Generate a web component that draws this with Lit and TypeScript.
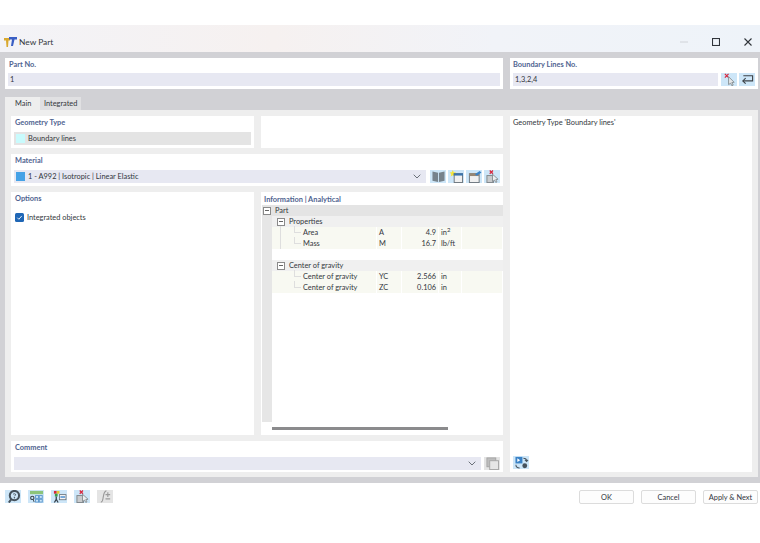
import { html, css, LitElement, svg } from 'lit';
import { customElement } from 'lit/decorators.js';

const btn = (content: unknown, cls = '') => html`
	<span class="tool ${cls}"><svg viewBox="0 0 16 14">${content}</svg></span>
`;

const cursorX = svg`
	<path d="M3 1l4 4M7 1L3 5" stroke="#d8263c" stroke-width="1.300"/>
	<path d="M7 4l6 6-2.500.3 1.500 2.700-1.500.7-1.300-2.700L7 12.500z" fill="#e6e8ea" stroke="#7d858a" stroke-width=".9"/>
`;
const returnArrow = svg`
	<path d="M3.500 3h10v5.500H3" fill="none" stroke="#3d4247" stroke-width="1.200"/>
	<path d="M6 5.500L3 8.500l3 3" fill="none" stroke="#3d4247" stroke-width="1.200"/>
`;
const book = svg`
	<path d="M1.500 1.500l6 1.500v10l-6-1.500zM14.500 1.500l-6 1.500v10l6-1.500z" fill="#77838c"/>
`;
const newWin = svg`
	<path d="M4 0l1 2.400 2.500.3-1.800 1.700.5 2.600L4 5.700 1.800 7l.5-2.600L.5 2.700 3 2.400z" fill="#f4e53a"/>
	<rect x="5.500" y="4" width="9" height="9.500" fill="#f0f0f0" stroke="#6b747b"/>
	<rect x="5" y="3.500" width="10" height="2.500" fill="#3b74ac"/>
`;
const editWin = svg`
	<rect x="2.500" y="4" width="10.500" height="9.500" fill="#f0f0f0" stroke="#6b747b"/>
	<rect x="2.500" y="3.500" width="10.500" height="3" fill="#978673"/>
	<path d="M8.500 4.500l5-3.500 2 1.800-5 3.500z" fill="#3a82c6"/>
`;
const pickX = svg`
	<path d="M5 .5l3.500 3.500M8.500 .5L5 4" stroke="#d8263c" stroke-width="1.300"/>
	<rect x="2" y="6" width="7" height="7.500" fill="#c9cbcd" stroke="#7d858a"/>
	<path d="M8 4.500l6 5.500-2.500.3 1.300 2.500-1.300.6-1.300-2.500L8 12.500z" fill="#eceeef" stroke="#7d858a" stroke-width=".9"/>
`;
const help = svg`
	<circle cx="9" cy="6" r="5" fill="none" stroke="#46525c" stroke-width="2.200"/>
	<path d="M5.500 10L3 13.500" stroke="#46525c" stroke-width="2.200"/>
	<path d="M7.500 4.800c.8-1.300 3-.8 2.800.5-.1.700-1.300.8-1.300 1.500" fill="none" stroke="#46525c"/>
	<circle cx="9" cy="8.300" r=".8" fill="#46525c"/>
`;
const units = svg`
	<rect x="1" y="1" width="14" height="3.500" fill="#8cc47a"/>
	<circle cx="3.500" cy="8.500" r="1.800" fill="none" stroke="#38444e" stroke-width="1.200"/>
	<path d="M4.500 10.500l1 2.500" stroke="#38444e"/>
	<rect x="7" y="6" width="3.200" height="3" fill="none" stroke="#5b96cc"/>
	<rect x="11" y="6" width="3.200" height="3" fill="none" stroke="#5b96cc"/>
	<rect x="7" y="10" width="3.200" height="3" fill="none" stroke="#5b96cc"/>
	<rect x="11" y="10" width="3.200" height="3" fill="none" stroke="#5b96cc"/>
`;
const display = svg`
	<rect x="2" y="1" width="3" height="3" fill="#d8263c"/>
	<rect x="5" y="1" width="3" height="3" fill="#e6c832"/>
	<rect x="3" y="4" width="3" height="3" fill="#3aa04a"/>
	<path d="M4.500 7v3l-2 3.500M4.500 10l2 3.500" fill="none" stroke="#38444e" stroke-width="1.400"/>
	<rect x="8" y="5" width="7" height="5.500" fill="#f5f5f5" stroke="#5a646c" stroke-width=".8"/>
	<rect x="9" y="6.800" width="5" height="1.500" fill="#4189ce"/>
`;
const formula = svg`
	<path d="M3 13c2 0 2-1.500 2.500-5S6.500 1 9 1" fill="none" stroke="#9a9a9a" stroke-width="1.200"/>
	<path d="M8 5h5M10.500 2.500v5M8 9.500h5" fill="none" stroke="#9a9a9a" stroke-width="1.200"/>
`;
const copyBox = svg`
	<rect x="2" y="1" width="9.500" height="9.500" fill="#bdbdbd" stroke="#a5a5a5"/>
	<rect x="5" y="4" width="9.500" height="9.500" fill="#e6e6e6" stroke="#a5a5a5"/>
`;
const swap = svg`
	<rect x="1.500" y="1" width="7.500" height="7" fill="#3a82c6"/>
	<path d="M3.500 2.500l3 2-3 2z" fill="#fff"/>
	<path d="M10 2.500c2.500 0 3.500 1.500 3.500 3M11.700 4.200l1.800 1.800 1.500-1.800" fill="none" stroke="#46525c" stroke-width="1.100"/>
	<circle cx="11.500" cy="10.500" r="2.600" fill="#46525c"/>
	<path d="M2 9.500c0 2 1.500 3.500 4 3.500" fill="none" stroke="#46525c" stroke-width="1.100"/>
`;

const chevron = html`<svg viewBox="0 0 8 5" width="8" height="5"><path d="M.7.7L4 4 7.300.7" fill="none" stroke="#6a7078" stroke-width="1"/></svg>`;

const expander = html`<span class="exp"><i></i></span>`;

@customElement('app-root')
export class AppRoot extends LitElement {
	static styles = css`
		:host {
			display: block;
			width: 760px;
			height: 543px;
			padding-top: 25px;
			box-sizing: border-box;
			background: #fff;
			font-family: Lato, Roboto, sans-serif;
			font-size: 7.4px;
			color: #33373d;
		}
		.titlebar {
			height: 27px;
			display: flex;
			align-items: center;
			padding: 7px 8px 0 4px;
			box-sizing: border-box;
			gap: 2px;
			font-size: 8.4px;
			background: linear-gradient(90deg, #f3f3f7 0%, #f6f1f0 36%, #f1f3f8 65%, #eef3f9 100%);
		}
		.titlebar .name { flex: 1; }
		.win { display: flex; align-items: center; gap: 24px; }
		.body { background: #d1d1d5; padding: 6px 2px 6px 5px; }
		.top { display: flex; gap: 7px; }
		.card { background: #fff; box-sizing: border-box; }
		.label { color: #4f6390; font-weight: 700; line-height: 11px; height: 11px; padding-left: 1px; }
		.partno { width: 498px; height: 31px; padding: 1px 3px 0 3px; }
		.lines { width: 248px; height: 31px; padding: 1px 3px 0 3px; }
		.lines .label { padding-left: 0; }
		.field {
			background: #e7e8f2;
			height: 13px;
			line-height: 13px;
			padding: 0 2px;
			margin-top: 3px;
			flex: 1;
		}
		.inline { display: flex; gap: 3px; align-items: flex-start; }
		.inline .tool { margin-top: 3px; }
		.pair { display: flex; gap: 2px; }
		.tool {
			display: inline-flex;
			width: 16px;
			height: 13px;
			align-items: center;
			justify-content: center;
			background: #cde6f8;
			flex: none;
		}
		.tool svg { width: 15px; height: 13px; }
		.tool.off { background: #e4e4e4; }
		.tabs { display: flex; margin-top: 8px; height: 13px; line-height: 13px; }
		.tab { box-sizing: border-box; }
		.tab.on { background: #eeeeee; width: 35px; padding-left: 10px; }
		.tab.off { background: #e0e0e2; width: 41px; padding-left: 4px; }
		.pane {
			background: #eeeeee;
			padding: 6px 6px 5px 6px;
			height: 367px;
			width: 753px;
			box-sizing: border-box;
			display: grid;
			grid-template-columns: 243px 242px 242px;
			grid-template-rows: 32px 32px 243px 31px;
			gap: 6px 7px;
		}
		.pane > .card { padding: 1px 3px 0 3px; }
		.geo .value {
			display: flex;
			align-items: center;
			gap: 3px;
			background: #e4e4e4;
			height: 13px;
			margin-top: 4px;
			padding-left: 2px;
		}
		.swatch { width: 9px; height: 9px; background: #c9fbfd; flex: none; }
		.swatch.blue { background: #45a2e6; }
		.pane > .right {
			grid-column: 3;
			grid-row: 1 / 5;
			display: flex;
			flex-direction: column;
			justify-content: space-between;
			align-items: flex-start;
			padding: 2px 3px 3px 3px;
		}
		.wide { grid-column: 1 / 3; }
		.select {
			display: flex;
			align-items: center;
			background: #e7e8f2;
			height: 13px;
			padding: 0 5px 0 2px;
			gap: 3px;
			flex: 1;
			margin-top: 4px;
		}
		.select .txt { flex: 1; }
		.row { display: flex; align-items: flex-start; }
		.tools { display: flex; gap: 2px; margin-left: 4px; margin-top: 4px; }
		.wide .inline .tool { margin-top: 4px; }
		.check { display: flex; align-items: center; gap: 3px; margin-top: 9px; padding-left: 1px; }
		.box {
			width: 9px;
			height: 9px;
			background: #1f66b5;
			border-radius: 1.5px;
			display: flex;
			align-items: center;
			justify-content: center;
		}
		.pane > .info { display: flex; flex-direction: column; padding: 2px 0 0 1px; }
		.info .label { padding-left: 2px; }
		.grid { flex: none; height: 217px; display: flex; flex-direction: column; }
		.rows { flex: 1; display: flex; flex-direction: column; border-left: 10px solid #e6e6e6; }
		.node { display: flex; align-items: center; gap: 4px; height: 11px; line-height: 12px; position: relative; flex: none; }
		.node.l0 { background: #e4e4e4; padding-left: 1px; }
		.node.l1 { background: #f0f0f0; padding-left: 5px; }
		.node.blank { background: #fff; }
		.leaf { display: grid; grid-template-columns: 105px 25px 37px 23px 1fr; height: 11px; line-height: 12px; background: #f8f9f2; flex: none; }
		.leaf > span { border-right: 1px solid #fff; padding-left: 2px; white-space: nowrap; box-sizing: border-box; height: 11px; }
		.leaf .nm { padding-left: 31px; position: relative; }
		.leaf .nm::before {
			content: "";
			position: absolute;
			left: 22px;
			top: 5px;
			width: 7px;
			border-top: 1px solid #dedede;
		}
		.leaf .nm::after {
			content: "";
			position: absolute;
			left: 22px;
			top: -1px;
			height: 6px;
			border-left: 1px solid #dedede;
		}
		.leaf .val { text-align: right; padding-right: 2px; }
		.exp {
			width: 8px;
			height: 8px;
			box-sizing: border-box;
			border: 1px solid #8a8a8a;
			background: #fff;
			display: inline-flex;
			align-items: center;
			justify-content: center;
			flex: none;
		}
		.exp i { width: 4px; height: 1px; background: #666; display: block; }
		sup { font-size: 6px; line-height: 0; }
		.vline { position: absolute; left: 8px; top: 10px; height: 33px; border-left: 1px solid #dedede; }
		.scroll { height: 12px; padding: 5px 0 0 10px; box-sizing: border-box; }
		.scroll i { display: block; width: 176px; height: 3px; background: #8b8b8d; }
		.footer {
			height: 25px;
			background: #fff;
			display: flex;
			align-items: center;
			padding: 2px 2px 0 5px;
			box-sizing: border-box;
		}
		.icons { display: flex; gap: 7px; flex: 1; }
		.actions { display: flex; gap: 7px; }
		.push {
			width: 55px;
			height: 14px;
			line-height: 13px;
			text-align: center;
			background: #fdfdfd;
			border: 1px solid #dcdcdc;
			border-radius: 2px;
			box-sizing: border-box;
		}
	`;

	render() {
		return html`
			<div class="titlebar">
				<svg viewBox="0 0 13 10" width="13" height="10">
					<path d="M0 1h6v2.500H4.500L4 10H2.500L2 3.500H0z" fill="#d9a92f"/>
					<path d="M5 0h8v2.500h-2.500L9 9H7l1-6.500H5z" fill="#3a5fc4"/>
				</svg>
				<span class="name">New Part</span>
				<span class="win">
					<svg viewBox="0 0 8 8" width="8" height="8"><path d="M0 4h8" stroke="#d0d3d8"/></svg>
					<svg viewBox="0 0 8 8" width="8" height="8"><rect x=".5" y=".5" width="7" height="7" fill="none" stroke="#30343a" stroke-width="1.100"/></svg>
					<svg viewBox="0 0 8 8" width="8" height="8"><path d="M.5.5l7 7M7.500.5l-7 7" stroke="#30343a" stroke-width="1.100"/></svg>
				</span>
			</div>
			<div class="body">
				<div class="top">
					<div class="card partno">
						<div class="label">Part No.</div>
						<div class="field">1</div>
					</div>
					<div class="card lines">
						<div class="label">Boundary Lines No.</div>
						<div class="inline">
							<div class="field">1,3,2,4</div>
							<span class="pair">${btn(cursorX)}${btn(returnArrow)}</span>
						</div>
					</div>
				</div>
				<div class="tabs">
					<div class="tab on">Main</div>
					<div class="tab off">Integrated</div>
				</div>
				<div class="pane">
					<div class="card geo">
						<div class="label">Geometry Type</div>
						<div class="value"><span class="swatch"></span>Boundary lines</div>
					</div>
					<div class="card"></div>
					<div class="card right">
						<div>Geometry Type 'Boundary lines'</div>
						${btn(swap)}
					</div>
					<div class="card wide">
						<div class="label">Material</div>
						<div class="row">
							<div class="select">
								<span class="swatch blue"></span>
								<span class="txt">1 - A992 | Isotropic | Linear Elastic</span>
								${chevron}
							</div>
							<div class="tools">
								${btn(book)}${btn(newWin)}${btn(editWin)}${btn(pickX)}
							</div>
						</div>
					</div>
					<div class="card">
						<div class="label">Options</div>
						<div class="check">
							<span class="box"><svg viewBox="0 0 8 8" width="7" height="7"><path d="M1.500 4.200l1.800 1.800 3.300-3.800" fill="none" stroke="#fff" stroke-width="1"/></svg></span>
							Integrated objects
						</div>
					</div>
					<div class="card info">
						<div class="label">Information | Analytical</div>
						<div class="grid">
							<div class="node l0">${expander}Part</div>
							<div class="rows">
								<div class="node l1">${expander}Properties<span class="vline"></span></div>
								<div class="leaf"><span class="nm">Area</span><span>A</span><span class="val">4.9</span><span>in<sup>2</sup></span><span></span></div>
								<div class="leaf"><span class="nm">Mass</span><span>M</span><span class="val">16.7</span><span>lb/ft</span><span></span></div>
								<div class="node blank"></div>
								<div class="node l1">${expander}Center of gravity</div>
								<div class="leaf"><span class="nm">Center of gravity</span><span>YC</span><span class="val">2.566</span><span>in</span><span></span></div>
								<div class="leaf"><span class="nm">Center of gravity</span><span>ZC</span><span class="val">0.106</span><span>in</span><span></span></div>
							</div>
						</div>
						<div class="scroll"><i></i></div>
					</div>
					<div class="card wide">
						<div class="label">Comment</div>
						<div class="inline">
							<div class="select"><span class="txt"></span>${chevron}</div>
							${btn(copyBox, 'off')}
						</div>
					</div>
				</div>
			</div>
			<div class="footer">
				<div class="icons">
					${btn(help)}${btn(units)}${btn(display)}${btn(pickX)}${btn(formula, 'off')}
				</div>
				<div class="actions">
					<div class="push">OK</div>
					<div class="push">Cancel</div>
					<div class="push">Apply &amp; Next</div>
				</div>
			</div>
		`;
	}
}
